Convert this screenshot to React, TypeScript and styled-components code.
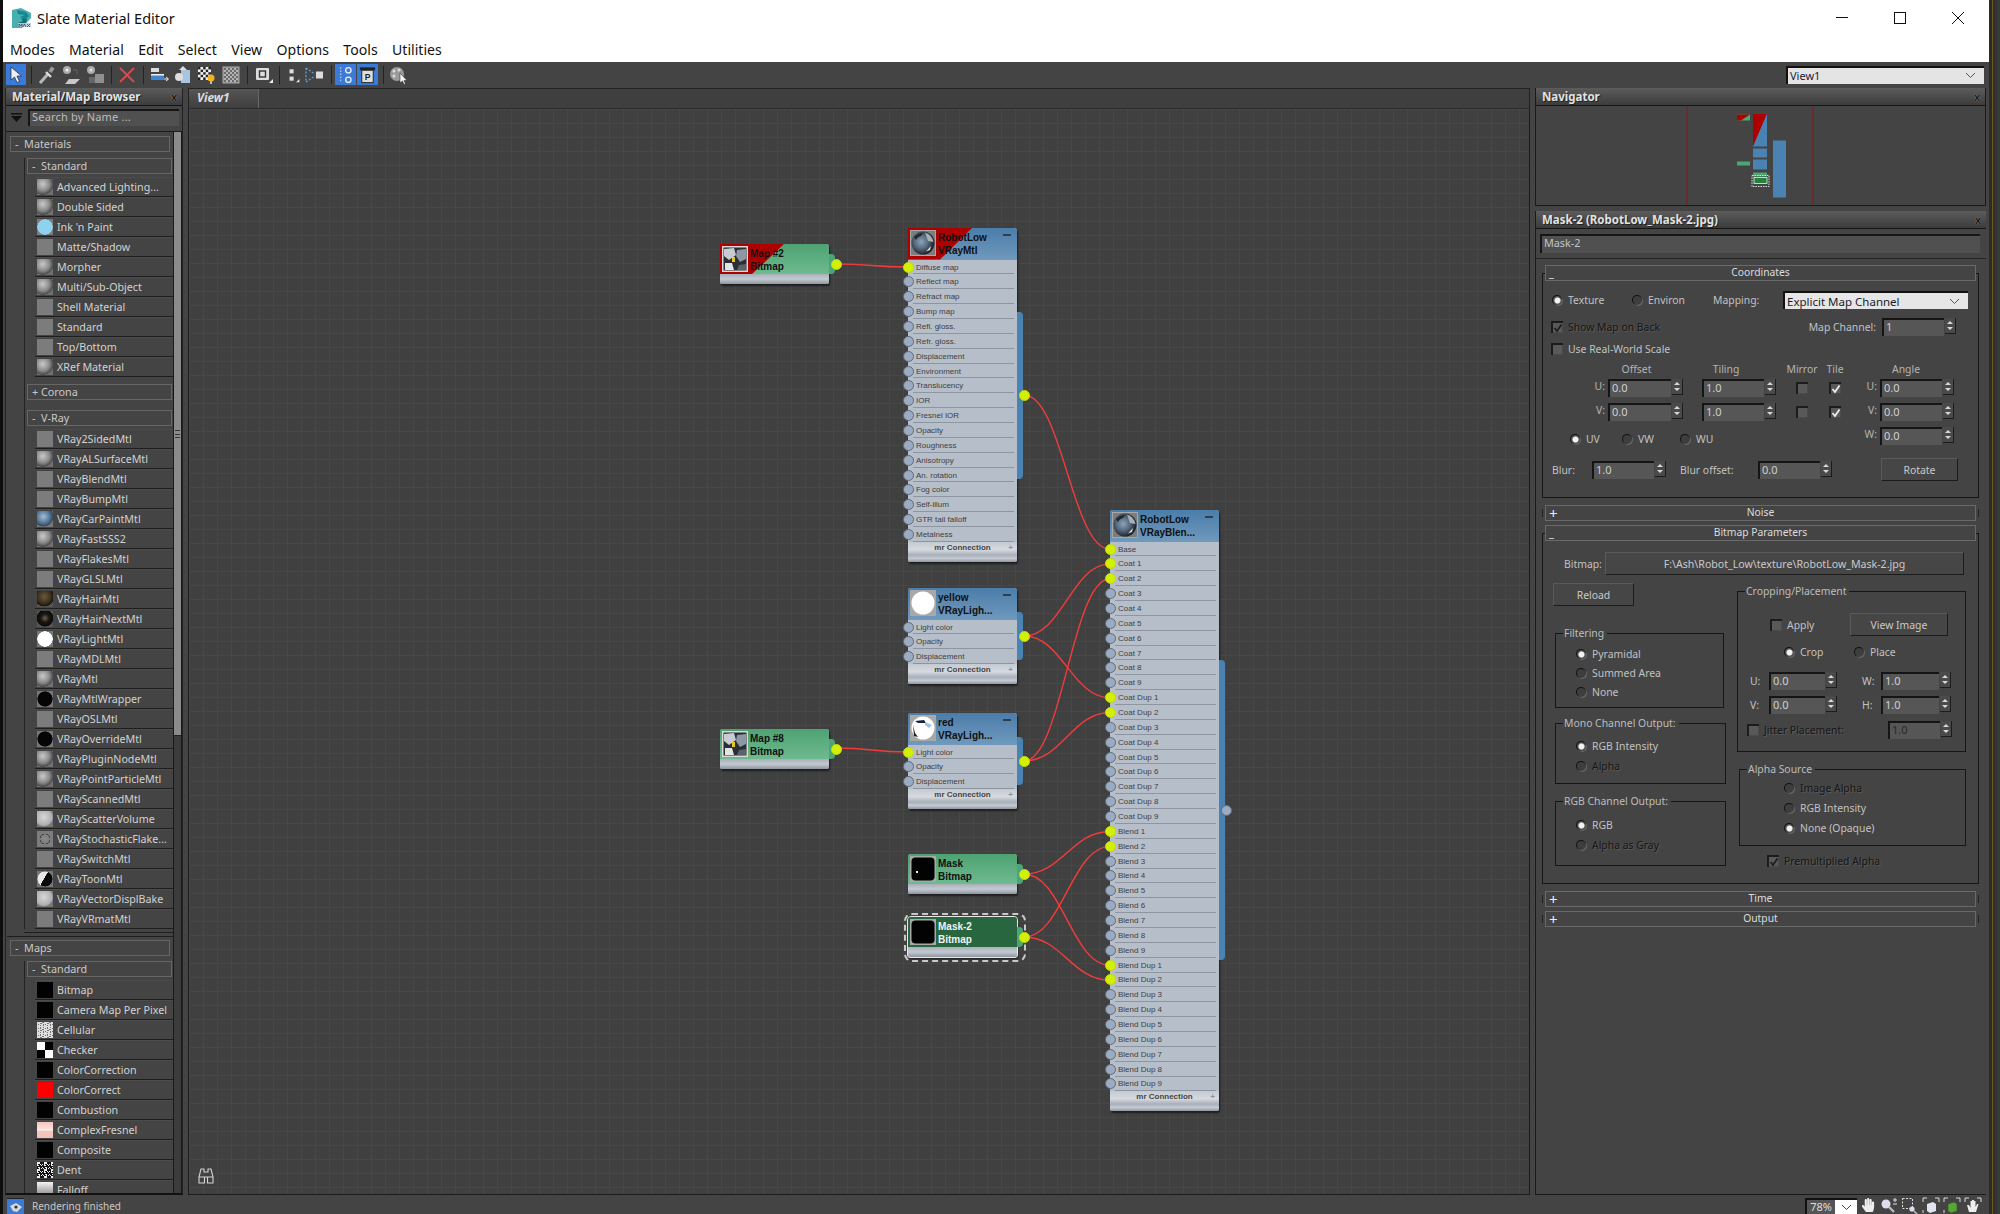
import React from "react";
import styled, { createGlobalStyle, css } from "styled-components";
import { FaHandPaper } from "react-icons/fa";

const UI_FONT = `"Noto Sans", "Open Sans", sans-serif`;
const NODE_FONT = `"Liberation Sans", Arial, sans-serif`;

// canvas origin on the page, so nodes and wires can be noted in page coordinates
const OX = 189;
const OY = 109;
const ROW = 14.87;

const GlobalStyle = createGlobalStyle`
  html, body {
    margin: 0;
    padding: 0;
    background: #333;
  }
  * {
    box-sizing: border-box;
  }
`;

const Root = styled.div`
  width: 2000px;
  height: 1214px;
  display: flex;
  overflow: hidden;
  font-family: ${UI_FONT};
  font-size: 10.4px;
  color: #c8c8c8;
  background: #444;
`;

const LeftEdge = styled.div`
  width: 3px;
  background: #0e0e0e;
`;

const RightEdge = styled.div`
  width: 11px;
  background: linear-gradient(
    90deg,
    #2a2a2a 0,
    #2a2a2a 3px,
    #6b5a1c 3px,
    #6b5a1c 4px,
    #2e2e2e 4px,
    #3c3c3c 11px
  );
`;

const Window = styled.div`
  width: 1986px;
  display: flex;
  flex-direction: column;
`;

const TitleBar = styled.div`
  height: 36px;
  background: #fff;
  display: flex;
  align-items: center;
  padding: 0 2px 0 9px;
  font-size: 14.5px;
  color: #111;
`;

const TitleText = styled.span`
  margin-left: 5px;
`;

const WinButtons = styled.div`
  margin-left: auto;
  display: flex;
`;

const WinButton = styled.div`
  width: 58px;
  height: 36px;
  display: flex;
  align-items: center;
  justify-content: center;
`;

const MenuBar = styled.div`
  height: 26px;
  background: #fff;
  display: flex;
  align-items: center;
  gap: 14.4px;
  padding-left: 7px;
  font-size: 14.1px;
  color: #111;
`;

const Toolbar = styled.div`
  height: 25px;
  background: #444;
  display: flex;
  align-items: center;
  padding: 0 5px 0 3px;
`;

const Tool = styled.div<{ $w?: number; $on?: boolean }>`
  width: ${(p) => p.$w ?? 24}px;
  height: 21px;
  display: flex;
  align-items: center;
  justify-content: center;
  flex: none;
  ${(p) =>
    p.$on &&
    css`
      background: #3b7ad6;
      margin-right: 1px;
    `}
`;

const ToolSep = styled.div`
  width: 8px;
  height: 18px;
  flex: none;
  background: linear-gradient(#222, #222) center / 1px 100% no-repeat;
`;

const ViewSelect = styled.div`
  margin-left: auto;
  width: 198px;
  height: 18px;
  background: #e4e4e4;
  border-top: 2px solid #111;
  border-left: 2px solid #111;
  display: flex;
  align-items: center;
  justify-content: space-between;
  padding: 0 8px 0 2px;
  color: #223;
  font-size: 11px;
`;

const Body = styled.div`
  height: 1109px;
  display: flex;
  padding: 1px 2px 1px 2px;
  gap: 5px;
`;

const Panel = styled.div`
  display: flex;
  flex-direction: column;
  background: #444;
`;

const LeftPanel = styled(Panel)`
  width: 178px;
  flex: none;
  border-left: 1px solid #222;
  border-right: 1px solid #222;
  border-bottom: 2px solid #111;
`;

const PanelHeader = styled.div`
  height: 18px;
  flex: none;
  display: flex;
  align-items: center;
  justify-content: space-between;
  padding: 0 5px 0 6px;
  background: linear-gradient(#5c5c5c, #3c3c3c);
  border-bottom: 1px solid #151515;
  font-weight: 700;
  font-size: 11.5px;
  color: #e2e2e2;
  text-shadow: 1px 1px 0 #222;
`;

const CloseMark = styled.span`
  font-family: ${NODE_FONT};
  font-weight: 700;
  font-size: 11px;
  color: #111;
  text-shadow: 0 0 1px #bbb;
`;

const SearchRow = styled.div`
  height: 26px;
  flex: none;
  display: flex;
  align-items: center;
  padding: 0 3px 3px 5px;
  border-bottom: 1px solid #1c1c1c;
`;

const SearchInput = styled.div`
  margin-left: 6px;
  flex: 1;
  height: 17px;
  background: #505050;
  border-top: 2px solid #161616;
  border-left: 2px solid #161616;
  padding-left: 2px;
  font-size: 11px;
  line-height: 12px;
  letter-spacing: 0.2px;
  color: #bdbdbd;
`;

const ListWrap = styled.div`
  flex: 1;
  min-height: 0;
  display: flex;
`;

const ListContent = styled.div`
  width: 167px;
  overflow: hidden;
  padding: 4px 0 0 4px;
`;

const Scrollbar = styled.div`
  width: 9px;
  background: #3c3c3c;
  border-left: 1px solid #1a1a1a;
  border-right: 1px solid #1a1a1a;
  flex: none;
`;

const ScrollThumb = styled.div`
  height: 604px;
  position: relative;
  background: #8b8b8b;
  border-bottom: 1px solid #222;
  &::after {
    content: "";
    position: absolute;
    top: 298px;
    left: 1px;
    right: 1px;
    height: 6px;
    border-top: 1px solid #333;
    border-bottom: 1px solid #333;
    background: linear-gradient(#333, #333) center / 100% 1px no-repeat;
  }
`;

const CatHeader = styled.div<{ $sub?: boolean; $mt?: number; $mb?: number }>`
  height: 16px;
  width: ${(p) => (p.$sub ? 145 : 160)}px;
  margin-left: ${(p) => (p.$sub ? 2 : 0)}px;
  margin-top: ${(p) => p.$mt ?? 0}px;
  margin-bottom: ${(p) => p.$mb ?? 0}px;
  border: 1px solid #666;
  background: #444;
  color: #c9c9c9;
  font-size: 10.8px;
  line-height: 13px;
  padding-left: 4px;
  white-space: pre;
`;

const CatBody = styled.div`
  margin-left: 14px;
  border-left: 1px solid #222;
`;

const ItemRow = styled.div`
  margin-left: 10px;
  width: 139px;
  height: 20px;
  display: flex;
  align-items: center;
  gap: 4px;
  padding-left: 2px;
  background: #444;
  border-bottom: 1px solid #1e1e1e;
  border-top: 1px solid #4c4c4c;
  font-size: 10.7px;
  color: #d2d2d2;
  white-space: nowrap;
  overflow: hidden;
`;

const thumbs: Record<string, ReturnType<typeof css>> = {
  flat: css`
    background: #7c7c7c;
  `,
  sphere: css`
    background: radial-gradient(circle at 36% 32%, #c9c9c9 0, #8a8a8a 45%, #4a4a4a 70%, #6a6a6a 72%, #777 100%);
  `,
  ink: css`
    background: radial-gradient(circle at center, #8fd2f0 0, #8fd2f0 66%, #7c7c7c 70%);
  `,
  blue: css`
    background: radial-gradient(circle at 40% 35%, #a5bcd3 0, #5e7f9f 40%, #34495c 68%, #777 72%);
  `,
  fur: css`
    background: radial-gradient(circle at 45% 35%, #6c5a3c 0, #3a2f1e 50%, #17130c 70%, #555 74%);
  `,
  furDark: css`
    background: radial-gradient(circle at 50% 45%, #6d6152 0, #1a1712 35%, #0b0b0b 68%, #555 72%);
  `,
  white: css`
    background: radial-gradient(circle, #fff 0, #fff 66%, #777 70%);
  `,
  black: css`
    background: radial-gradient(circle, #050505 0, #050505 64%, #777 70%);
  `,
  light: css`
    background: radial-gradient(circle at 42% 38%, #d8d8d8 0, #b0b0b0 60%, #8a8a8a 68%, #777 72%);
  `,
  toon: css`
    background: radial-gradient(circle, transparent 0, transparent 64%, #777 68%),
      linear-gradient(120deg, #e8e8e8 0, #e8e8e8 45%, #0a0a0a 46%);
  `,
  dots: css`
    background: radial-gradient(circle, #8c8c8c 0, #7c7c7c 40%, #444 42%, #444 46%, #7c7c7c 48%);
  `,
  mapBlack: css`
    background: #020202;
  `,
  red: css`
    background: #fa0000;
  `,
  checker: css`
    background: conic-gradient(#000 25%, #fff 0 50%, #000 0 75%, #fff 0);
  `,
  fresnel: css`
    background: linear-gradient(#f2c8c0, #fbe0da 45%, #fff 50%, #f4c8be 55%, #f0c0b6);
  `,
  falloff: css`
    background: linear-gradient(#f4f4f4, #777);
  `,
};

const Thumb = styled.span<{ $kind: string }>`
  width: 16px;
  height: 16px;
  flex: none;
  display: block;
  ${(p) => thumbs[p.$kind]}
`;

const SpeckleSvg = styled.svg`
  flex: none;
`;

// deterministic speckle for the procedural map swatches
const Speckle = ({ dark }: { dark?: boolean }) => {
  const cells: React.ReactNode[] = [];
  for (let y = 0; y < 16; y++) {
    for (let x = 0; x < 16; x++) {
      const v = (x * x * 7 + y * y * 13 + x * y * 5 + x + y * 3) % 7;
      const on = dark ? v < 3 : v < 5;
      cells.push(
        <rect key={`${x}-${y}`} x={x} y={y} width="1" height="1" fill={on ? (dark ? "#eee" : "#ddd") : dark ? "#111" : "#777"} />
      );
    }
  }
  return (
    <SpeckleSvg width="16" height="16" viewBox="0 0 16 16">
      {cells}
    </SpeckleSvg>
  );
};

const Item = ({ name, kind }: { name: string; kind: string }) => (
  <ItemRow>
    {kind === "noise" ? <Speckle /> : kind === "noiseDark" ? <Speckle dark /> : <Thumb $kind={kind} />}
    {name}
  </ItemRow>
);

const stdMaterials = [
  ["Advanced Lighting...", "sphere"],
  ["Double Sided", "sphere"],
  ["Ink 'n Paint", "ink"],
  ["Matte/Shadow", "flat"],
  ["Morpher", "sphere"],
  ["Multi/Sub-Object", "sphere"],
  ["Shell Material", "flat"],
  ["Standard", "flat"],
  ["Top/Bottom", "flat"],
  ["XRef Material", "sphere"],
];

const vrayMaterials = [
  ["VRay2SidedMtl", "flat"],
  ["VRayALSurfaceMtl", "sphere"],
  ["VRayBlendMtl", "flat"],
  ["VRayBumpMtl", "flat"],
  ["VRayCarPaintMtl", "blue"],
  ["VRayFastSSS2", "sphere"],
  ["VRayFlakesMtl", "flat"],
  ["VRayGLSLMtl", "flat"],
  ["VRayHairMtl", "fur"],
  ["VRayHairNextMtl", "furDark"],
  ["VRayLightMtl", "white"],
  ["VRayMDLMtl", "flat"],
  ["VRayMtl", "sphere"],
  ["VRayMtlWrapper", "black"],
  ["VRayOSLMtl", "flat"],
  ["VRayOverrideMtl", "black"],
  ["VRayPluginNodeMtl", "sphere"],
  ["VRayPointParticleMtl", "sphere"],
  ["VRayScannedMtl", "flat"],
  ["VRayScatterVolume", "light"],
  ["VRayStochasticFlake...", "dots"],
  ["VRaySwitchMtl", "flat"],
  ["VRayToonMtl", "toon"],
  ["VRayVectorDisplBake", "light"],
  ["VRayVRmatMtl", "flat"],
];

const stdMaps = [
  ["Bitmap", "mapBlack"],
  ["Camera Map Per Pixel", "mapBlack"],
  ["Cellular", "noise"],
  ["Checker", "checker"],
  ["ColorCorrection", "mapBlack"],
  ["ColorCorrect", "red"],
  ["Combustion", "mapBlack"],
  ["ComplexFresnel", "fresnel"],
  ["Composite", "mapBlack"],
  ["Dent", "noiseDark"],
  ["Falloff", "falloff"],
];

const CatClose = styled.div`
  height: 4px;
  margin-left: 14px;
  border-bottom: 1px solid #1e1e1e;
`;

const CatRule = styled.div`
  height: 4px;
  width: 168px;
  margin: 0 0 3px -3px;
  border-bottom: 1px solid #1e1e1e;
`;

const CenterPanel = styled(Panel)`
  width: 1342px;
  flex: none;
`;

const TabBar = styled.div`
  height: 20px;
  flex: none;
  display: flex;
  background: #3f3f3f;
  border-top: 1px solid #222;
  border-right: 1px solid #222;
`;

const ViewTab = styled.div`
  width: 71px;
  height: 19px;
  background: linear-gradient(#555, #3f3f3f);
  border-left: 1px solid #222;
  border-right: 1px solid #666;
  padding-left: 8px;
  font-style: italic;
  font-weight: 700;
  font-size: 11.8px;
  line-height: 16px;
  color: #ddd;
`;

const Canvas = styled.div`
  flex: 1;
  position: relative;
  overflow: hidden;
  background-color: #404040;
  background-image: linear-gradient(#474747 1px, transparent 1px), linear-gradient(90deg, #474747 1px, transparent 1px);
  background-size: 14px 14px;
  border: 1px solid #1c1c1c;
  border-top-color: #2a2a2a;
`;

const WireLayer = styled.svg`
  position: absolute;
  left: 0;
  top: 0;
  width: 100%;
  height: 100%;
`;

const SearchGlasses = styled.svg`
  position: absolute;
  left: 9px;
  bottom: 10px;
`;

const headerColours = {
  blue: "linear-gradient(#4a7da9, #7099bd)",
  green: "linear-gradient(#4ea272, #6eba90)",
  selected: "#27663f",
};

const NodeBox = styled.div<{ $x: number; $y: number; $selected?: boolean }>`
  position: absolute;
  left: ${(p) => p.$x - OX}px;
  top: ${(p) => p.$y - OY}px;
  width: 109px;
  background: #b6bec9;
  border-radius: 3px 3px 2px 2px;
  box-shadow: 1px 2px 2px rgba(0, 0, 0, 0.55);
  font-family: ${NODE_FONT};
  color: #333;
  ${(p) =>
    p.$selected &&
    css`
      outline: 1px solid #e8e8e8;
      &::after {
        content: "";
        position: absolute;
        inset: -4px -9px -5px -4px;
        border: 2px dashed #c8c8c8;
        border-radius: 8px;
      }
    `}
`;

const NodeHeader = styled.div<{ $tone: keyof typeof headerColours; $h: number }>`
  height: ${(p) => p.$h}px;
  position: relative;
  display: flex;
  padding: 2px 0 0 2px;
  border-radius: 3px 3px 0 0;
  background: ${(p) => headerColours[p.$tone]};
  color: ${(p) => (p.$tone === "selected" ? "#f2f2f2" : "#101010")};
`;

const ErrorFlag = styled.div`
  position: absolute;
  left: 0;
  top: 0;
  width: 64px;
  height: 100%;
  background: #ad0000;
  clip-path: polygon(0 0, 100% 0, 50% 100%, 0 100%);
`;

const NodePreview = styled.svg`
  position: relative;
  flex: none;
`;

const NodeTitle = styled.div`
  position: relative;
  margin: 1px 0 0 2px;
  font-size: 10px;
  font-weight: 700;
  line-height: 13px;
  white-space: nowrap;
`;

const Collapse = styled.div`
  position: absolute;
  right: 6px;
  top: 6px;
  width: 8px;
  height: 2px;
  background: #2c3e50;
`;

const NodeRow = styled.div`
  height: ${ROW}px;
  position: relative;
  display: flex;
  align-items: center;
  padding-left: 8px;
  font-size: 8px;
  color: #3f3f3f;
  &::after {
    content: "";
    position: absolute;
    left: 5px;
    right: 3px;
    bottom: 0;
    height: 1px;
    background: #8d95a1;
  }
`;

const Socket = styled.span<{ $on?: boolean }>`
  position: absolute;
  left: -5.5px;
  top: 50%;
  margin-top: -5.5px;
  width: 11px;
  height: 11px;
  border-radius: 50%;
  background: ${(p) => (p.$on ? "#d2ef08" : "#9aabc2")};
  border: 1px solid ${(p) => (p.$on ? "#c2dc06" : "#5f6b7a")};
  z-index: 2;
`;

const NodeFooter = styled.div`
  height: 13px;
  position: relative;
  text-align: center;
  font-size: 8px;
  font-weight: 700;
  line-height: 12px;
  color: #444;
  background: linear-gradient(#c4cad2, #d6dae0 60%, #a9b0ba);
  span {
    position: absolute;
    right: 4px;
    top: 0;
    color: #8a929d;
  }
`;

const NodeGrip = styled.div<{ $h: number }>`
  height: ${(p) => p.$h}px;
  border-radius: 0 0 2px 2px;
  background: linear-gradient(#a8afb9, #c4cad2 50%, #8f969f);
`;

const OutTab = styled.div<{ $top: number; $h: number; $green?: boolean }>`
  position: absolute;
  left: 100%;
  top: ${(p) => p.$top}px;
  height: ${(p) => p.$h}px;
  width: 6px;
  border-radius: 0 4px 4px 0;
  background: ${(p) => (p.$green ? "#4ba576" : "#4a82b2")};
`;

const OutSocket = styled.span<{ $on?: boolean }>`
  position: absolute;
  left: 1.5px;
  top: 50%;
  margin-top: -5.5px;
  width: 11px;
  height: 11px;
  border-radius: 50%;
  background: ${(p) => (p.$on ? "#d2ef08" : "#9aabc2")};
  border: 1px solid ${(p) => (p.$on ? "#c2dc06" : "#5f6b7a")};
  z-index: 2;
`;

const Preview = ({ kind }: { kind: string }) => (
  <NodePreview width="26" height="26" viewBox="0 0 26 26">
    <rect width="26" height="26" fill={kind === "map" ? "#d8d8d8" : "#a8a8a8"} />
    {kind === "map" && (
      <g>
        <rect x="1.5" y="1.5" width="23" height="23" fill="#2a2f36" />
        <path d="M2 3 L12 2 L14 9 L7 14 L2 10 Z" fill="#c8ccd2" />
        <path d="M15 4 L24 3 L24 13 L18 16 L14 10 Z" fill="#8e98a4" />
        <path d="M3 17 L10 17 L12 24 L3 24 Z" fill="#e2e4e6" />
        <rect x="10" y="11" width="3" height="5" fill="#e5c62a" />
        <path d="M17 19 L24 18 L24 24 L15 24 Z" fill="#5a626c" />
      </g>
    )}
    {kind === "sphere" && (
      <g>
        <defs>
          <radialGradient id="metal" cx="42%" cy="45%" r="60%">
            <stop offset="0" stopColor="#8ea3b8" />
            <stop offset="0.5" stopColor="#56697c" />
            <stop offset="1" stopColor="#15181c" />
          </radialGradient>
        </defs>
        <rect x="1" y="1" width="24" height="24" fill="#7c7c7c" />
        <circle cx="13" cy="13" r="11.5" fill="url(#metal)" />
        <path d="M15 2.5 Q22 5 23.5 12 L18 11 Z" fill="#a9b0b8" />
        <path d="M4 7 Q8 3 13 3 L11 6 Q7 7 6 10 Z" fill="#22272c" />
        <path d="M16 21.5 L21 16 L20 20 Z" fill="#dde1e6" />
      </g>
    )}
    {kind === "white" && (
      <g>
        <circle cx="13" cy="13" r="11.5" fill="#fff" />
      </g>
    )}
    {kind === "red" && (
      <g>
        <circle cx="13" cy="13" r="11.5" fill="#fff" />
        <path d="M5 6 L14 5 L16 8 L8 8 Z" fill="#10253f" />
        <path d="M15 7 L22 10 L19 13 L15 10 Z" fill="#9cc4ea" />
        <path d="M3 10 L5 18 L8 22 L4 21 Z" fill="#222" />
      </g>
    )}
    {kind === "mask" && (
      <g>
        <rect x="1.5" y="1.5" width="23" height="23" rx="4" fill="#030303" />
        <rect x="6" y="15" width="2" height="2" fill="#eee" />
      </g>
    )}
    {kind === "maskBlack" && <rect x="1.5" y="1.5" width="23" height="23" rx="4" fill="#030303" />}
  </NodePreview>
);

const node = (
  x: number,
  y: number,
  tone: keyof typeof headerColours,
  title: [string, string],
  preview: string,
  rows: string[],
  on: number[],
  opts: { flag?: boolean; tab?: [number, number]; out?: boolean; selected?: boolean } = {}
) => ({ x, y, tone, title, preview, rows, on, ...opts });

const blendRows = [
  "Base",
  ...[1, 2, 3, 4, 5, 6, 7, 8, 9].map((n) => `Coat ${n}`),
  ...[1, 2, 3, 4, 5, 6, 7, 8, 9].map((n) => `Coat Dup ${n}`),
  ...[1, 2, 3, 4, 5, 6, 7, 8, 9].map((n) => `Blend ${n}`),
  ...[1, 2, 3, 4, 5, 6, 7, 8, 9].map((n) => `Blend Dup ${n}`),
];

const lightRows = ["Light color", "Opacity", "Displacement"];

const nodes = [
  node(720, 244, "green", ["Map #2", "Bitmap"], "map", [], [], { flag: true, tab: [10, 20], out: true }),
  node(720, 729, "green", ["Map #8", "Bitmap"], "map", [], [], { tab: [10, 20], out: true }),
  node(
    908,
    228,
    "blue",
    ["RobotLow", "VRayMtl"],
    "sphere",
    [
      "Diffuse map",
      "Reflect map",
      "Refract map",
      "Bump map",
      "Refl. gloss.",
      "Refr. gloss.",
      "Displacement",
      "Environment",
      "Translucency",
      "IOR",
      "Fresnel IOR",
      "Opacity",
      "Roughness",
      "Anisotropy",
      "An. rotation",
      "Fog color",
      "Self-illum",
      "GTR tail falloff",
      "Metalness",
    ],
    [0],
    { flag: true, tab: [84, 167], out: true }
  ),
  node(908, 588, "blue", ["yellow", "VRayLigh..."], "white", lightRows, [], { tab: [24, 48], out: true }),
  node(908, 713, "blue", ["red", "VRayLigh..."], "red", lightRows, [0], { tab: [24, 48], out: true }),
  node(908, 854, "green", ["Mask", "Bitmap"], "mask", [], [], { tab: [10, 20], out: true }),
  node(908, 917, "selected", ["Mask-2", "Bitmap"], "maskBlack", [], [], { tab: [10, 20], out: true, selected: true }),
  node(1110, 510, "blue", ["RobotLow", "VRayBlen..."], "sphere", blendRows, [0, 1, 2, 10, 11, 19, 20, 28, 29], {
    tab: [150, 300],
  }),
];

const blendIn = (i: number) => 549 + i * ROW;

const wires: [number, number, number, number][] = [
  [836, 264, 908, 267],
  [836, 748, 908, 752],
  [1024, 395, 1110, blendIn(0)],
  [1024, 636, 1110, blendIn(1)],
  [1024, 636, 1110, blendIn(10)],
  [1024, 761, 1110, blendIn(2)],
  [1024, 761, 1110, blendIn(11)],
  [1024, 874, 1110, blendIn(19)],
  [1024, 874, 1110, blendIn(28)],
  [1024, 937, 1110, blendIn(20)],
  [1024, 937, 1110, blendIn(29)],
];

const RightPanel = styled.div`
  width: 451px;
  flex: none;
  display: flex;
  flex-direction: column;
  gap: 5px;
`;

const NavPanel = styled(Panel)`
  height: 118px;
  flex: none;
  border: 1px solid #1a1a1a;
  border-top: none;
`;

const NavBody = styled.svg`
  flex: 1;
  display: block;
  width: 100%;
`;

const ParamPanel = styled(Panel)`
  flex: 1;
  min-height: 0;
  border-left: 1px solid #1a1a1a;
  border-bottom: 1px solid #1a1a1a;
`;

const NameInput = styled.div`
  height: 19px;
  margin: 5px 6px 0 4px;
  background: #505050;
  border-top: 2px solid #161616;
  border-left: 2px solid #161616;
  padding-left: 2px;
  font-size: 10.8px;
  line-height: 14px;
  color: #c4c4c4;
`;

const Rollouts = styled.div`
  margin-top: 5px;
  border-top: 1px solid #222;
  padding: 6px 7px 0 6px;
  display: flex;
  flex-direction: column;
  gap: 4px;
`;

const RolloutWrap = styled.div<{ $closed?: boolean }>`
  position: relative;
  ${(p) =>
    p.$closed &&
    css`
      &::before {
        content: "";
        position: absolute;
        inset: 4px 0;
        border-left: 1px solid #222;
        border-right: 1px solid #222;
      }
    `}
`;

const RolloutHead = styled.div`
  position: relative;
  z-index: 1;
  height: 16px;
  margin: 0 3px;
  background: #444;
  border: 1px solid #696969;
  text-align: center;
  line-height: 13px;
  font-size: 10.3px;
  color: #dcdcdc;
`;

const RolloutSign = styled.span<{ $plus?: boolean }>`
  position: absolute;
  left: 3px;
  top: ${(p) => (p.$plus ? 0 : -1)}px;
  font-size: ${(p) => (p.$plus ? 15 : 11)}px;
  line-height: 15px;
  color: #eee;
`;

const RolloutBody = styled.div`
  margin-top: -8px;
  padding: 8px 0 0 0;
  border: 1px solid #161616;
  margin-bottom: 3px;
`;

const Rollout = ({ title, closed, children }: { title: string; closed?: boolean; children?: React.ReactNode }) => (
  <RolloutWrap $closed={closed}>
    <RolloutHead>
      <RolloutSign $plus={closed}>{closed ? "+" : "_"}</RolloutSign>
      {title}
    </RolloutHead>
    {!closed && <RolloutBody>{children}</RolloutBody>}
  </RolloutWrap>
);

const Row = styled.div<{ $h: number; $pl?: number; $mt?: number }>`
  height: ${(p) => p.$h}px;
  margin-top: ${(p) => p.$mt ?? 0}px;
  padding-left: ${(p) => p.$pl ?? 0}px;
  display: flex;
  align-items: center;
`;

const Text = styled.span<{ $dim?: boolean; $w?: number; $right?: boolean; $pl?: number }>`
  ${(p) => p.$w !== undefined && `width: ${p.$w}px; flex: none;`}
  ${(p) => p.$right && "text-align: right; padding-right: 6px;"}
  ${(p) => p.$pl !== undefined && `padding-left: ${p.$pl}px;`}
  white-space: nowrap;
  color: ${(p) => (p.$dim ? "#151515" : "#c2c2c2")};
  ${(p) => p.$dim && "text-shadow: 1px 1px 0 #5a5a5a;"}
`;

const RadioBox = styled.span<{ $w?: number }>`
  ${(p) => p.$w !== undefined && `width: ${p.$w}px;`}
  flex: none;
  display: flex;
  align-items: center;
  gap: 6px;
`;

const RadioDot = styled.span<{ $on?: boolean }>`
  width: 10px;
  height: 10px;
  flex: none;
  border-radius: 50%;
  border-top: 1px solid #111;
  border-left: 1px solid #111;
  background: ${(p) =>
    p.$on ? "radial-gradient(circle, #f2f2f2 0, #f2f2f2 40%, #555 55%, #3a3a3a 100%)" : "#3e3e3e"};
  box-shadow: 1px 1px 0 #666;
`;

const Radio = ({ on, w, dim, children }: { on?: boolean; w?: number; dim?: boolean; children: React.ReactNode }) => (
  <RadioBox $w={w}>
    <RadioDot $on={on} />
    <Text $dim={dim}>{children}</Text>
  </RadioBox>
);

const CheckBox = styled.span`
  width: 12px;
  height: 12px;
  flex: none;
  display: flex;
  align-items: center;
  justify-content: center;
  background: #595959;
  border-top: 2px solid #1c1c1c;
  border-left: 2px solid #1c1c1c;
  box-shadow: inset -1px -1px 0 #4a4a4a;
`;

const Check = ({ on, dark }: { on?: boolean; dark?: boolean }) => (
  <CheckBox>
    {on && (
      <svg width="10" height="10" viewBox="0 0 10 10">
        <path d="M1.5 5 L4 8 L8.5 1.5" fill="none" stroke={dark ? "#1e1e1e" : "#eee"} strokeWidth="1.8" />
      </svg>
    )}
  </CheckBox>
);

const CheckRow = styled.span`
  display: flex;
  align-items: center;
  gap: 5px;
`;

const SpinnerBox = styled.div<{ $w: number }>`
  width: ${(p) => p.$w}px;
  height: 18px;
  flex: none;
  display: flex;
  gap: 1px;
`;

const SpinField = styled.div<{ $dim?: boolean }>`
  flex: 1;
  background: #565656;
  border-top: 2px solid #151515;
  border-left: 2px solid #151515;
  padding-left: 2px;
  font-size: 11px;
  line-height: 13px;
  color: ${(p) => (p.$dim ? "#2a2a2a" : "#cfcfcf")};
`;

const SpinArrows = styled.div`
  width: 11px;
  height: 16px;
  flex: none;
  display: flex;
  flex-direction: column;
  align-items: center;
  justify-content: center;
  gap: 3px;
  background: #4a4a4a;
  border-right: 1px solid #1c1c1c;
  border-bottom: 1px solid #1c1c1c;
`;

const SpinArrow = styled.i<{ $down?: boolean }>`
  width: 0;
  height: 0;
  border-left: 3px solid transparent;
  border-right: 3px solid transparent;
  ${(p) => (p.$down ? "border-top: 3px solid #d8d8d8;" : "border-bottom: 3px solid #d8d8d8;")}
`;

const Spinner = ({ w = 75, dim, children }: { w?: number; dim?: boolean; children: React.ReactNode }) => (
  <SpinnerBox $w={w}>
    <SpinField $dim={dim}>{children}</SpinField>
    <SpinArrows>
      <SpinArrow />
      <SpinArrow $down />
    </SpinArrows>
  </SpinnerBox>
);

const FlatButton = styled.div<{ $w: number; $h?: number; $ml?: number }>`
  width: ${(p) => p.$w}px;
  height: ${(p) => p.$h ?? 23}px;
  margin-left: ${(p) => p.$ml ?? 0}px;
  flex: none;
  display: flex;
  align-items: center;
  justify-content: center;
  background: #464646;
  border: 1px solid #5a5a5a;
  border-right-color: #1c1c1c;
  border-bottom-color: #1c1c1c;
  color: #cacaca;
`;

const MappingSelect = styled.div`
  width: 185px;
  height: 18px;
  flex: none;
  display: flex;
  align-items: center;
  justify-content: space-between;
  padding: 0 8px 0 2px;
  background: #e6e6e6;
  border-top: 2px solid #111;
  border-left: 2px solid #111;
  color: #1b1b2c;
  font-size: 11.5px;
`;

const CoordGrid = styled.div`
  display: grid;
  grid-template-columns: 65px 75px 19px 74px 9px 34px 32px 29px 74px;
  grid-template-rows: 17px 24px 24px 24px;
  margin-top: 5px;
`;

const GridHead = styled.div<{ $col: number; $shift?: number }>`
  grid-column: ${(p) => p.$col};
  grid-row: 1;
  padding-right: ${(p) => p.$shift ?? 0}px;
  text-align: center;
  line-height: 14px;
  white-space: nowrap;
  color: #b4b4b4;
`;

const Cell = styled.div<{ $col: number; $row: number; $right?: boolean; $center?: boolean }>`
  grid-column: ${(p) => p.$col};
  grid-row: ${(p) => p.$row};
  ${(p) => p.$right && "text-align: right; padding-right: 3px; line-height: 15px; color: #b4b4b4;"}
  ${(p) => p.$center && "display: flex; justify-content: center; padding-top: 3px;"}
`;

const UvwRadios = styled.div`
  grid-column: 1 / 8;
  grid-row: 4;
  display: flex;
  align-items: center;
  padding-left: 27px;
`;

const BitmapRow = styled(Row)`
  justify-content: flex-start;
`;

const PathButton = styled(FlatButton)`
  font-size: 10.6px;
`;

const ColumnsRow = styled.div`
  display: flex;
  margin-top: 8px;
  padding-left: 10px;
  height: 300px;
`;

const ColLeft = styled.div`
  width: 184px;
  flex: none;
  display: flex;
  flex-direction: column;
  align-items: flex-start;
`;

const ColRight = styled.div`
  width: 231px;
  flex: none;
  padding-top: 8px;
`;

const GroupBox = styled.div<{ $w: number; $h: number; $mt: number; $ml?: number }>`
  position: relative;
  width: ${(p) => p.$w}px;
  height: ${(p) => p.$h}px;
  margin-top: ${(p) => p.$mt}px;
  margin-left: ${(p) => p.$ml ?? 0}px;
  border: 1px solid #161616;
`;

const GroupTitle = styled.span`
  position: absolute;
  left: 7px;
  top: -9px;
  padding: 0 3px 0 1px;
  background: #444;
  line-height: 16px;
  white-space: nowrap;
  color: #bdbdbd;
`;

const RadioStack = styled.div<{ $pl: number; $pt: number; $gap?: number }>`
  display: flex;
  flex-direction: column;
  gap: ${(p) => p.$gap ?? 6}px;
  padding: ${(p) => p.$pt}px 0 0 ${(p) => p.$pl}px;
`;

const Chevron = ({ c = "#555" }: { c?: string }) => (
  <svg width="11" height="7" viewBox="0 0 11 7">
    <path d="M1 1 L5.5 5.5 L10 1" fill="none" stroke={c} strokeWidth="1" />
  </svg>
);

const StatusBar = styled.div`
  height: 18px;
  display: flex;
  align-items: center;
  padding: 0 6px 0 4px;
  background: #444;
`;

const StatusIcon = styled.div`
  width: 17px;
  height: 16px;
  margin-top: 2px;
  background: #3b7ad6;
  display: flex;
  align-items: center;
  justify-content: center;
  border-top: 1px solid #222;
`;

const StatusText = styled.span`
  margin: 2px 0 0 8px;
  font-size: 10px;
  color: #c8c8c8;
`;

const ZoomBox = styled.div`
  margin-left: auto;
  width: 52px;
  height: 16px;
  margin-top: 2px;
  display: flex;
  background: #fff;
  border-top: 2px solid #111;
  border-left: 2px solid #111;
`;

const ZoomValue = styled.span`
  width: 28px;
  background: #555;
  color: #ddd;
  font-size: 11px;
  line-height: 14px;
  text-align: center;
`;

const ZoomArrow = styled.span`
  flex: 1;
  display: flex;
  align-items: center;
  justify-content: center;
`;

const NavTool = styled.div`
  width: 21px;
  height: 18px;
  display: flex;
  align-items: center;
  justify-content: center;
  color: #eee;
`;

const Logo = () => (
  <svg width="20" height="20" viewBox="0 0 20 20">
    <path d="M0 2 L9 0 L19 5 L19 10 L10 20 L0 20 Z" fill="#49aeb0" />
    <path d="M5 2 L14 4 L17 8 L14 11 L8 9 L13 7 L6 6 Z" fill="#12888f" />
    <path d="M9 10 L15 11 L14 15 L6 15 L11 13 Z" fill="#0d6f78" />
    <rect x="6" y="15" width="13" height="4" fill="#bcd" opacity="0.85" />
    <path d="M7 19 V16 L8.5 18 L10 16 V19 M11 19 L12.5 16 L14 19 M15 16 L18 19 M18 16 L15 19" stroke="#335" strokeWidth="0.7" fill="none" />
  </svg>
);

const I = ({ children }: { children: React.ReactNode }) => (
  <svg width="22" height="20" viewBox="0 0 22 20">
    {children}
  </svg>
);

const CheckerFill = ({ x, y, n, a, b, s }: { x: number; y: number; n: number; a: string; b: string; s: number }) => {
  const cells: React.ReactNode[] = [];
  for (let j = 0; j < n; j++) {
    for (let i = 0; i < n; i++) {
      cells.push(<rect key={`${i}-${j}`} x={x + i * s} y={y + j * s} width={s} height={s} fill={(i + j) % 2 ? a : b} />);
    }
  }
  return <g>{cells}</g>;
};

export default function App() {
  return (
    <Root>
      <GlobalStyle />
      <LeftEdge />
      <Window>
        <TitleBar>
          <Logo />
          <TitleText>Slate Material Editor</TitleText>
          <WinButtons>
            <WinButton>
              <svg width="14" height="14" viewBox="0 0 14 14">
                <path d="M1 6.5 H13" stroke="#111" />
              </svg>
            </WinButton>
            <WinButton>
              <svg width="14" height="14" viewBox="0 0 14 14">
                <rect x="1.5" y="1.5" width="11" height="11" fill="none" stroke="#111" />
              </svg>
            </WinButton>
            <WinButton>
              <svg width="14" height="14" viewBox="0 0 14 14">
                <path d="M1 1 L13 13 M13 1 L1 13" stroke="#111" />
              </svg>
            </WinButton>
          </WinButtons>
        </TitleBar>
        <MenuBar>
          {["Modes", "Material", "Edit", "Select", "View", "Options", "Tools", "Utilities"].map((m) => (
            <span key={m}>{m}</span>
          ))}
        </MenuBar>
        <Toolbar>
          <Tool $w={20} $on>
            <svg width="14" height="18" viewBox="0 0 14 18">
              <path d="M2 1 L2 14 L5.5 11 L8 16.5 L10.5 15.5 L8 10 L12.5 10 Z" fill="#eee" stroke="#223" strokeWidth="0.7" />
            </svg>
          </Tool>
          <ToolSep />
          <Tool>
            <I>
              <path d="M4 18 L12 9" stroke="#b8b8b8" strokeWidth="3" />
              <path d="M10 7 L15 12" stroke="#ddd" strokeWidth="2.4" />
              <path d="M14 7 L17 2.5" stroke="#999" strokeWidth="4" />
            </I>
          </Tool>
          <Tool>
            <I>
              <circle cx="7" cy="5" r="4" fill="#aaa" />
              <circle cx="7" cy="5" r="1.6" fill="#eee" />
              <path d="M9 14 H20 L15 19 H5 Z" fill="#c8c8c8" />
              <path d="M13 5 H17 V9" stroke="#666" fill="none" />
            </I>
          </Tool>
          <Tool>
            <I>
              <circle cx="7" cy="5" r="4" fill="#aaa" />
              <circle cx="7" cy="5" r="1.6" fill="#ddd" />
              <rect x="11" y="9" width="9" height="9" fill="#8f8f8f" />
              <rect x="5" y="12" width="6" height="6" fill="#666" />
            </I>
          </Tool>
          <ToolSep />
          <Tool>
            <I>
              <path d="M4 3 L18 17 M18 3 L4 17" stroke="#dc4a4a" strokeWidth="1.8" />
            </I>
          </Tool>
          <ToolSep />
          <Tool>
            <I>
              <rect x="3" y="3" width="8" height="4" fill="#ddd" />
              <rect x="3" y="10" width="13" height="5" fill="#3f86d2" />
              <rect x="3" y="9" width="13" height="1.5" fill="#eee" />
              <path d="M16 14 H20 M18 12 L20.5 14 L18 16" stroke="#eee" fill="none" />
            </I>
          </Tool>
          <Tool>
            <I>
              <path d="M11 1 L15 5 H7 Z" fill="#ddd" />
              <rect x="9" y="5" width="9" height="13" fill="#a9c4df" />
              <circle cx="7" cy="12" r="4" fill="#ddd" />
            </I>
          </Tool>
          <Tool>
            <I>
              <rect x="2" y="2" width="13" height="13" fill="#eee" />
              <CheckerFill x={2} y={2} n={5} s={2.6} a="#eee" b="#222" />
              <circle cx="15" cy="13" r="3.5" fill="#f3b21f" />
              <rect x="14" y="16" width="2" height="3" fill="#bbb" />
            </I>
          </Tool>
          <Tool>
            <I>
              <rect x="3" y="2" width="16" height="16" fill="#8b8b8b" stroke="#aaa" />
              <CheckerFill x={4} y={3} n={7} s={2} a="#b4b4b4" b="#6c6c6c" />
            </I>
          </Tool>
          <ToolSep />
          <Tool>
            <I>
              <rect x="4" y="3" width="13" height="12" rx="1" fill="#ddd" />
              <rect x="7.5" y="6" width="6" height="6" fill="none" stroke="#333" strokeWidth="1.4" />
              <path d="M21 14 V18 H17 Z" fill="#eee" />
            </I>
          </Tool>
          <ToolSep />
          <Tool $w={18}>
            <I>
              <rect x="8" y="3" width="5" height="5" fill="#ddd" />
              <rect x="8" y="12" width="5" height="5" fill="#ddd" />
              <path d="M20 15 V19 H16 Z" fill="#eee" />
            </I>
          </Tool>
          <Tool $w={26}>
            <I>
              <path d="M3 3 L3 17 M3 3 L12 9 M3 17 L12 11" stroke="#5aa5e6" strokeWidth="1.2" strokeDasharray="2 1.5" fill="none" />
              <rect x="13" y="6.5" width="7" height="7" fill="#ddd" />
            </I>
          </Tool>
          <ToolSep />
          <Tool $w={21} $on>
            <I>
              <path d="M6 2 V18" stroke="#dde" strokeDasharray="1.6 1.6" />
              <circle cx="14" cy="5" r="2.8" fill="none" stroke="#eee" strokeWidth="1.4" />
              <circle cx="14" cy="15" r="2.8" fill="none" stroke="#eee" strokeWidth="1.4" />
            </I>
          </Tool>
          <Tool $w={21} $on>
            <I>
              <rect x="3" y="2" width="16" height="3" fill="#222" />
              <rect x="5" y="5" width="12" height="13" fill="#ddd" stroke="#222" />
              <text x="8" y="15" fontSize="9" fontWeight="700" fontFamily={NODE_FONT} fill="#222">
                P
              </text>
            </I>
          </Tool>
          <ToolSep />
          <Tool>
            <I>
              <circle cx="9" cy="9" r="7" fill="#9a9a9a" />
              <circle cx="6" cy="6" r="1.5" fill="#ddd" />
              <circle cx="11" cy="5" r="1.5" fill="#ddd" />
              <circle cx="6" cy="11" r="1.5" fill="#ddd" />
              <path d="M12 8 V18 L14.5 16 L16 19.5 L17.5 19 L16 15.5 L19 15.5 Z" fill="#f4f4f4" stroke="#222" strokeWidth="0.5" />
            </I>
          </Tool>
          <ViewSelect>
            View1
            <Chevron />
          </ViewSelect>
        </Toolbar>
        <Body>
          <LeftPanel>
            <PanelHeader>
              Material/Map Browser
              <CloseMark>x</CloseMark>
            </PanelHeader>
            <SearchRow>
              <svg width="11" height="9" viewBox="0 0 11 9">
                <path d="M0 0 H11 V1.5 H0 Z M0 3 H11 L5.5 9 Z" fill="#111" />
              </svg>
              <SearchInput>Search by Name ...</SearchInput>
            </SearchRow>
            <ListWrap>
              <ListContent>
                <CatHeader $mb={6}>{"-  Materials"}</CatHeader>
                <CatBody>
                  <CatHeader $sub $mb={3}>
                    {"-  Standard"}
                  </CatHeader>
                  {stdMaterials.map(([n, k]) => (
                    <Item key={n} name={n} kind={k} />
                  ))}
                  <CatHeader $sub $mt={7} $mb={10}>
                    {"+ Corona"}
                  </CatHeader>
                  <CatHeader $sub $mb={3}>
                    {"-  V-Ray"}
                  </CatHeader>
                  {vrayMaterials.map(([n, k]) => (
                    <Item key={n} name={n} kind={k} />
                  ))}
                </CatBody>
                <CatClose />
                <CatRule />
                <CatHeader $mb={5}>{"-  Maps"}</CatHeader>
                <CatBody>
                  <CatHeader $sub $mb={3}>
                    {"-  Standard"}
                  </CatHeader>
                  {stdMaps.map(([n, k]) => (
                    <Item key={n} name={n} kind={k} />
                  ))}
                </CatBody>
              </ListContent>
              <Scrollbar>
                <ScrollThumb />
              </Scrollbar>
            </ListWrap>
          </LeftPanel>
          <CenterPanel>
            <TabBar>
              <ViewTab>View1</ViewTab>
            </TabBar>
            <Canvas>
              <WireLayer viewBox={`${OX} ${OY} 1340 1085`} preserveAspectRatio="xMinYMin slice">
                {wires.map(([x1, y1, x2, y2], i) => (
                  <path
                    key={i}
                    d={`M${x1} ${y1} C${x1 + 38} ${y1} ${x2 - 38} ${y2} ${x2} ${y2}`}
                    fill="none"
                    stroke="#f23b3b"
                    strokeWidth="1.4"
                  />
                ))}
              </WireLayer>
              {nodes.map((n) => {
                const isMap = n.rows.length === 0;
                return (
                  <NodeBox key={`${n.title[0]}-${n.y}`} $x={n.x} $y={n.y} $selected={n.selected}>
                    <NodeHeader $tone={n.tone} $h={isMap ? 30 : 31.6}>
                      {n.flag && <ErrorFlag />}
                      <Preview kind={n.preview} />
                      <NodeTitle>
                        {n.title[0]}
                        <br />
                        {n.title[1]}
                      </NodeTitle>
                      {!isMap && <Collapse />}
                    </NodeHeader>
                    {n.rows.map((r, i) => (
                      <NodeRow key={r}>
                        <Socket $on={n.on.includes(i)} />
                        {r}
                      </NodeRow>
                    ))}
                    {!isMap && (
                      <NodeFooter>
                        mr Connection<span>+</span>
                      </NodeFooter>
                    )}
                    <NodeGrip $h={isMap ? 10 : 7} />
                    {n.tab && (
                      <OutTab $top={n.tab[0]} $h={n.tab[1]} $green={n.tone !== "blue"}>
                        <OutSocket $on={!!n.out} />
                      </OutTab>
                    )}
                  </NodeBox>
                );
              })}
              <SearchGlasses width="16" height="16" viewBox="0 0 16 16">
                <path
                  d="M3 1 H6 V4 H10 V1 H13 L15 9 V15 H9.5 V9 H6.5 V15 H1 V9 Z M1 9 H6.5 M9.5 9 H15"
                  fill="none"
                  stroke="#d4d4d4"
                  strokeWidth="1.1"
                />
              </SearchGlasses>
            </Canvas>
          </CenterPanel>
          <RightPanel>
            <NavPanel>
              <PanelHeader>
                Navigator
                <CloseMark>x</CloseMark>
              </PanelHeader>
              <NavBody viewBox="1536 106 449 98">
                <path d="M1687 106 V204 M1813 106 V204" stroke="#8a1616" />
                <rect x="1737" y="114" width="13" height="6" fill="#4aa773" />
                <path d="M1737 114 H1750 L1741 120 H1737 Z" fill="#ad0000" />
                <rect x="1753" y="113" width="14" height="33" fill="#4a82b2" />
                <path d="M1753 113 H1767 L1753 146 Z" fill="#ad0000" />
                <rect x="1753" y="148" width="14" height="9" fill="#4a82b2" />
                <rect x="1753" y="159" width="14" height="10" fill="#4a82b2" />
                <rect x="1737" y="161" width="13" height="4" fill="#4aa773" />
                <rect x="1753" y="172" width="14" height="4" fill="#4aa773" />
                <rect x="1754" y="177" width="13" height="6" fill="#27803f" stroke="#eee" strokeWidth="0.8" />
                <rect x="1752" y="175" width="17" height="11" fill="none" stroke="#ddd" strokeDasharray="1.5 1" />
                <rect x="1773" y="140" width="13" height="57" fill="#4a82b2" />
              </NavBody>
            </NavPanel>
            <ParamPanel>
              <PanelHeader>
                Mask-2 (RobotLow_Mask-2.jpg)
                <CloseMark>x</CloseMark>
              </PanelHeader>
              <NameInput>Mask-2</NameInput>
              <Rollouts>
                <Rollout title="Coordinates">
                  <Row $h={18} $pl={9} $mt={9}>
                    <Radio on w={80}>
                      Texture
                    </Radio>
                    <Radio w={81}>Environ</Radio>
                    <Text $w={70}>Mapping:</Text>
                    <MappingSelect>
                      Explicit Map Channel
                      <Chevron />
                    </MappingSelect>
                  </Row>
                  <Row $h={18} $pl={8} $mt={9}>
                    <CheckRow>
                      <Check on dark />
                      <Text $dim $w={214}>
                        Show Map on Back
                      </Text>
                    </CheckRow>
                    <Text $w={100} $right>
                      Map Channel:
                    </Text>
                    <Spinner w={74}>1</Spinner>
                  </Row>
                  <Row $h={16} $pl={8} $mt={5}>
                    <CheckRow>
                      <Check />
                      <Text>Use Real-World Scale</Text>
                    </CheckRow>
                  </Row>
                  <CoordGrid>
                    <GridHead $col={2} $shift={18}>
                      Offset
                    </GridHead>
                    <GridHead $col={4} $shift={26}>
                      Tiling
                    </GridHead>
                    <GridHead $col={6}>Mirror</GridHead>
                    <GridHead $col={7}>Tile</GridHead>
                    <GridHead $col={9} $shift={22}>
                      Angle
                    </GridHead>
                    <Cell $col={1} $row={2} $right>
                      U:
                    </Cell>
                    <Cell $col={2} $row={2}>
                      <Spinner>0.0</Spinner>
                    </Cell>
                    <Cell $col={4} $row={2}>
                      <Spinner w={74}>1.0</Spinner>
                    </Cell>
                    <Cell $col={6} $row={2} $center>
                      <Check />
                    </Cell>
                    <Cell $col={7} $row={2} $center>
                      <Check on />
                    </Cell>
                    <Cell $col={8} $row={2} $right>
                      U:
                    </Cell>
                    <Cell $col={9} $row={2}>
                      <Spinner w={74}>0.0</Spinner>
                    </Cell>
                    <Cell $col={1} $row={3} $right>
                      V:
                    </Cell>
                    <Cell $col={2} $row={3}>
                      <Spinner>0.0</Spinner>
                    </Cell>
                    <Cell $col={4} $row={3}>
                      <Spinner w={74}>1.0</Spinner>
                    </Cell>
                    <Cell $col={6} $row={3} $center>
                      <Check />
                    </Cell>
                    <Cell $col={7} $row={3} $center>
                      <Check on />
                    </Cell>
                    <Cell $col={8} $row={3} $right>
                      V:
                    </Cell>
                    <Cell $col={9} $row={3}>
                      <Spinner w={74}>0.0</Spinner>
                    </Cell>
                    <UvwRadios>
                      <Radio on w={52}>
                        UV
                      </Radio>
                      <Radio w={58}>VW</Radio>
                      <Radio>WU</Radio>
                    </UvwRadios>
                    <Cell $col={8} $row={4} $right>
                      W:
                    </Cell>
                    <Cell $col={9} $row={4}>
                      <Spinner w={74}>0.0</Spinner>
                    </Cell>
                  </CoordGrid>
                  <Row $h={23} $pl={9} $mt={7}>
                    <Text $w={40}>Blur:</Text>
                    <Spinner w={74}>1.0</Spinner>
                    <Text $w={92} $pl={14}>
                      Blur offset:
                    </Text>
                    <Spinner w={74}>0.0</Spinner>
                    <FlatButton $w={77} $ml={49}>
                      Rotate
                    </FlatButton>
                  </Row>
                  <Row $h={16} />
                </Rollout>
                <Rollout title="Noise" closed />
                <Rollout title="Bitmap Parameters">
                  <BitmapRow $h={23} $pl={21} $mt={10}>
                    <Text $w={41}>Bitmap:</Text>
                    <PathButton $w={359}>{"F:\\Ash\\Robot_Low\\texture\\RobotLow_Mask-2.jpg"}</PathButton>
                  </BitmapRow>
                  <ColumnsRow>
                    <ColLeft>
                      <FlatButton $w={81}>Reload</FlatButton>
                      <GroupBox $w={169} $h={75} $mt={27} $ml={2}>
                        <GroupTitle>Filtering</GroupTitle>
                        <RadioStack $pl={20} $pt={13} $gap={5}>
                          <Radio on>Pyramidal</Radio>
                          <Radio>Summed Area</Radio>
                          <Radio>None</Radio>
                        </RadioStack>
                      </GroupBox>
                      <GroupBox $w={171} $h={61} $mt={15} $ml={2}>
                        <GroupTitle>Mono Channel Output:</GroupTitle>
                        <RadioStack $pl={20} $pt={15}>
                          <Radio on>RGB Intensity</Radio>
                          <Radio dim>Alpha</Radio>
                        </RadioStack>
                      </GroupBox>
                      <GroupBox $w={171} $h={65} $mt={17} $ml={2}>
                        <GroupTitle>RGB Channel Output:</GroupTitle>
                        <RadioStack $pl={20} $pt={16}>
                          <Radio on>RGB</Radio>
                          <Radio dim>Alpha as Gray</Radio>
                        </RadioStack>
                      </GroupBox>
                    </ColLeft>
                    <ColRight>
                      <GroupBox $w={229} $h={161} $mt={0}>
                        <GroupTitle>Cropping/Placement</GroupTitle>
                        <Row $h={23} $pl={32} $mt={21}>
                          <CheckRow>
                            <Check />
                            <Text $w={63}>Apply</Text>
                          </CheckRow>
                          <FlatButton $w={98}>View Image</FlatButton>
                        </Row>
                        <Row $h={16} $pl={46} $mt={8}>
                          <Radio on w={70}>
                            Crop
                          </Radio>
                          <Radio>Place</Radio>
                        </Row>
                        <Row $h={18} $pl={12} $mt={12}>
                          <Text $w={19}>U:</Text>
                          <Spinner w={68}>0.0</Spinner>
                          <Text $w={44} $pl={25}>
                            W:
                          </Text>
                          <Spinner w={70}>1.0</Spinner>
                        </Row>
                        <Row $h={18} $pl={12} $mt={6}>
                          <Text $w={19}>V:</Text>
                          <Spinner w={68}>0.0</Spinner>
                          <Text $w={44} $pl={25}>
                            H:
                          </Text>
                          <Spinner w={70}>1.0</Spinner>
                        </Row>
                        <Row $h={18} $pl={9} $mt={7}>
                          <CheckRow>
                            <Check />
                            <Text $dim $w={124}>
                              Jitter Placement:
                            </Text>
                          </CheckRow>
                          <Spinner w={64} dim>
                            1.0
                          </Spinner>
                        </Row>
                      </GroupBox>
                      <GroupBox $w={227} $h={77} $mt={17} $ml={2}>
                        <GroupTitle>Alpha Source</GroupTitle>
                        <RadioStack $pl={44} $pt={11}>
                          <Radio dim>Image Alpha</Radio>
                          <Radio>RGB Intensity</Radio>
                          <Radio on>None (Opaque)</Radio>
                        </RadioStack>
                      </GroupBox>
                      <Row $h={16} $pl={30} $mt={7}>
                        <CheckRow>
                          <Check on dark />
                          <Text $dim>Premultiplied Alpha</Text>
                        </CheckRow>
                      </Row>
                    </ColRight>
                  </ColumnsRow>
                </Rollout>
                <Rollout title="Time" closed />
                <Rollout title="Output" closed />
              </Rollouts>
            </ParamPanel>
          </RightPanel>
        </Body>
        <StatusBar>
          <StatusIcon>
            <svg width="14" height="12" viewBox="0 0 14 12">
              <path d="M1 5 L7 2 L13 6 L8 11 L4 10 Z" fill="#d8d8d8" />
              <circle cx="7" cy="6" r="1.6" fill="#333" />
            </svg>
          </StatusIcon>
          <StatusText>Rendering finished</StatusText>
          <ZoomBox>
            <ZoomValue>78%</ZoomValue>
            <ZoomArrow>
              <Chevron c="#444" />
            </ZoomArrow>
          </ZoomBox>
          <NavTool>
            <FaHandPaper size={14} />
          </NavTool>
          <NavTool>
            <svg width="18" height="17" viewBox="0 0 18 17">
              <circle cx="6" cy="7" r="4.5" fill="#dde" />
              <path d="M9 10 L14 15" stroke="#bbb" strokeWidth="2.4" />
              <path d="M13 3 H17 M15 1 V5 M13 7 H17" stroke="#ddd" />
            </svg>
          </NavTool>
          <NavTool>
            <svg width="18" height="17" viewBox="0 0 18 17">
              <rect x="1.5" y="1.5" width="10" height="10" fill="none" stroke="#ddd" strokeDasharray="2 1.5" />
              <circle cx="11" cy="12" r="2.6" fill="#dde" />
              <path d="M13 14 L16 17" stroke="#bbb" strokeWidth="1.6" />
            </svg>
          </NavTool>
          <NavTool>
            <svg width="18" height="17" viewBox="0 0 18 17">
              <path d="M1 5 V1 H5 M13 1 H17 V5 M1 13 V16" stroke="#ddd" fill="none" />
              <path d="M5 7 L11 5 L14 7 V14 L8 16 L5 14 Z" fill="#dfe4ee" />
            </svg>
          </NavTool>
          <NavTool>
            <svg width="18" height="17" viewBox="0 0 18 17">
              <path d="M1 5 V1 H5 M13 1 H17 V5 M1 13 V16" stroke="#ddd" fill="none" />
              <path d="M5 7 L11 5 L14 7 V14 L8 16 L5 14 Z" fill="#5aa538" stroke="#2a5e1a" strokeWidth="0.6" />
            </svg>
          </NavTool>
          <NavTool>
            <svg width="18" height="17" viewBox="0 0 18 17">
              <path d="M1 5 V1 H5 M13 1 H17 V5" stroke="#ddd" fill="none" />
              <path d="M5 15 L3 8 L5 8 L6.5 11 V4 H8 V9 V3 H10 V9 V4 H11.5 V10 L13 7 H14.5 L12 15 Z" fill="#eee" />
            </svg>
          </NavTool>
        </StatusBar>
      </Window>
      <RightEdge />
    </Root>
  );
}
